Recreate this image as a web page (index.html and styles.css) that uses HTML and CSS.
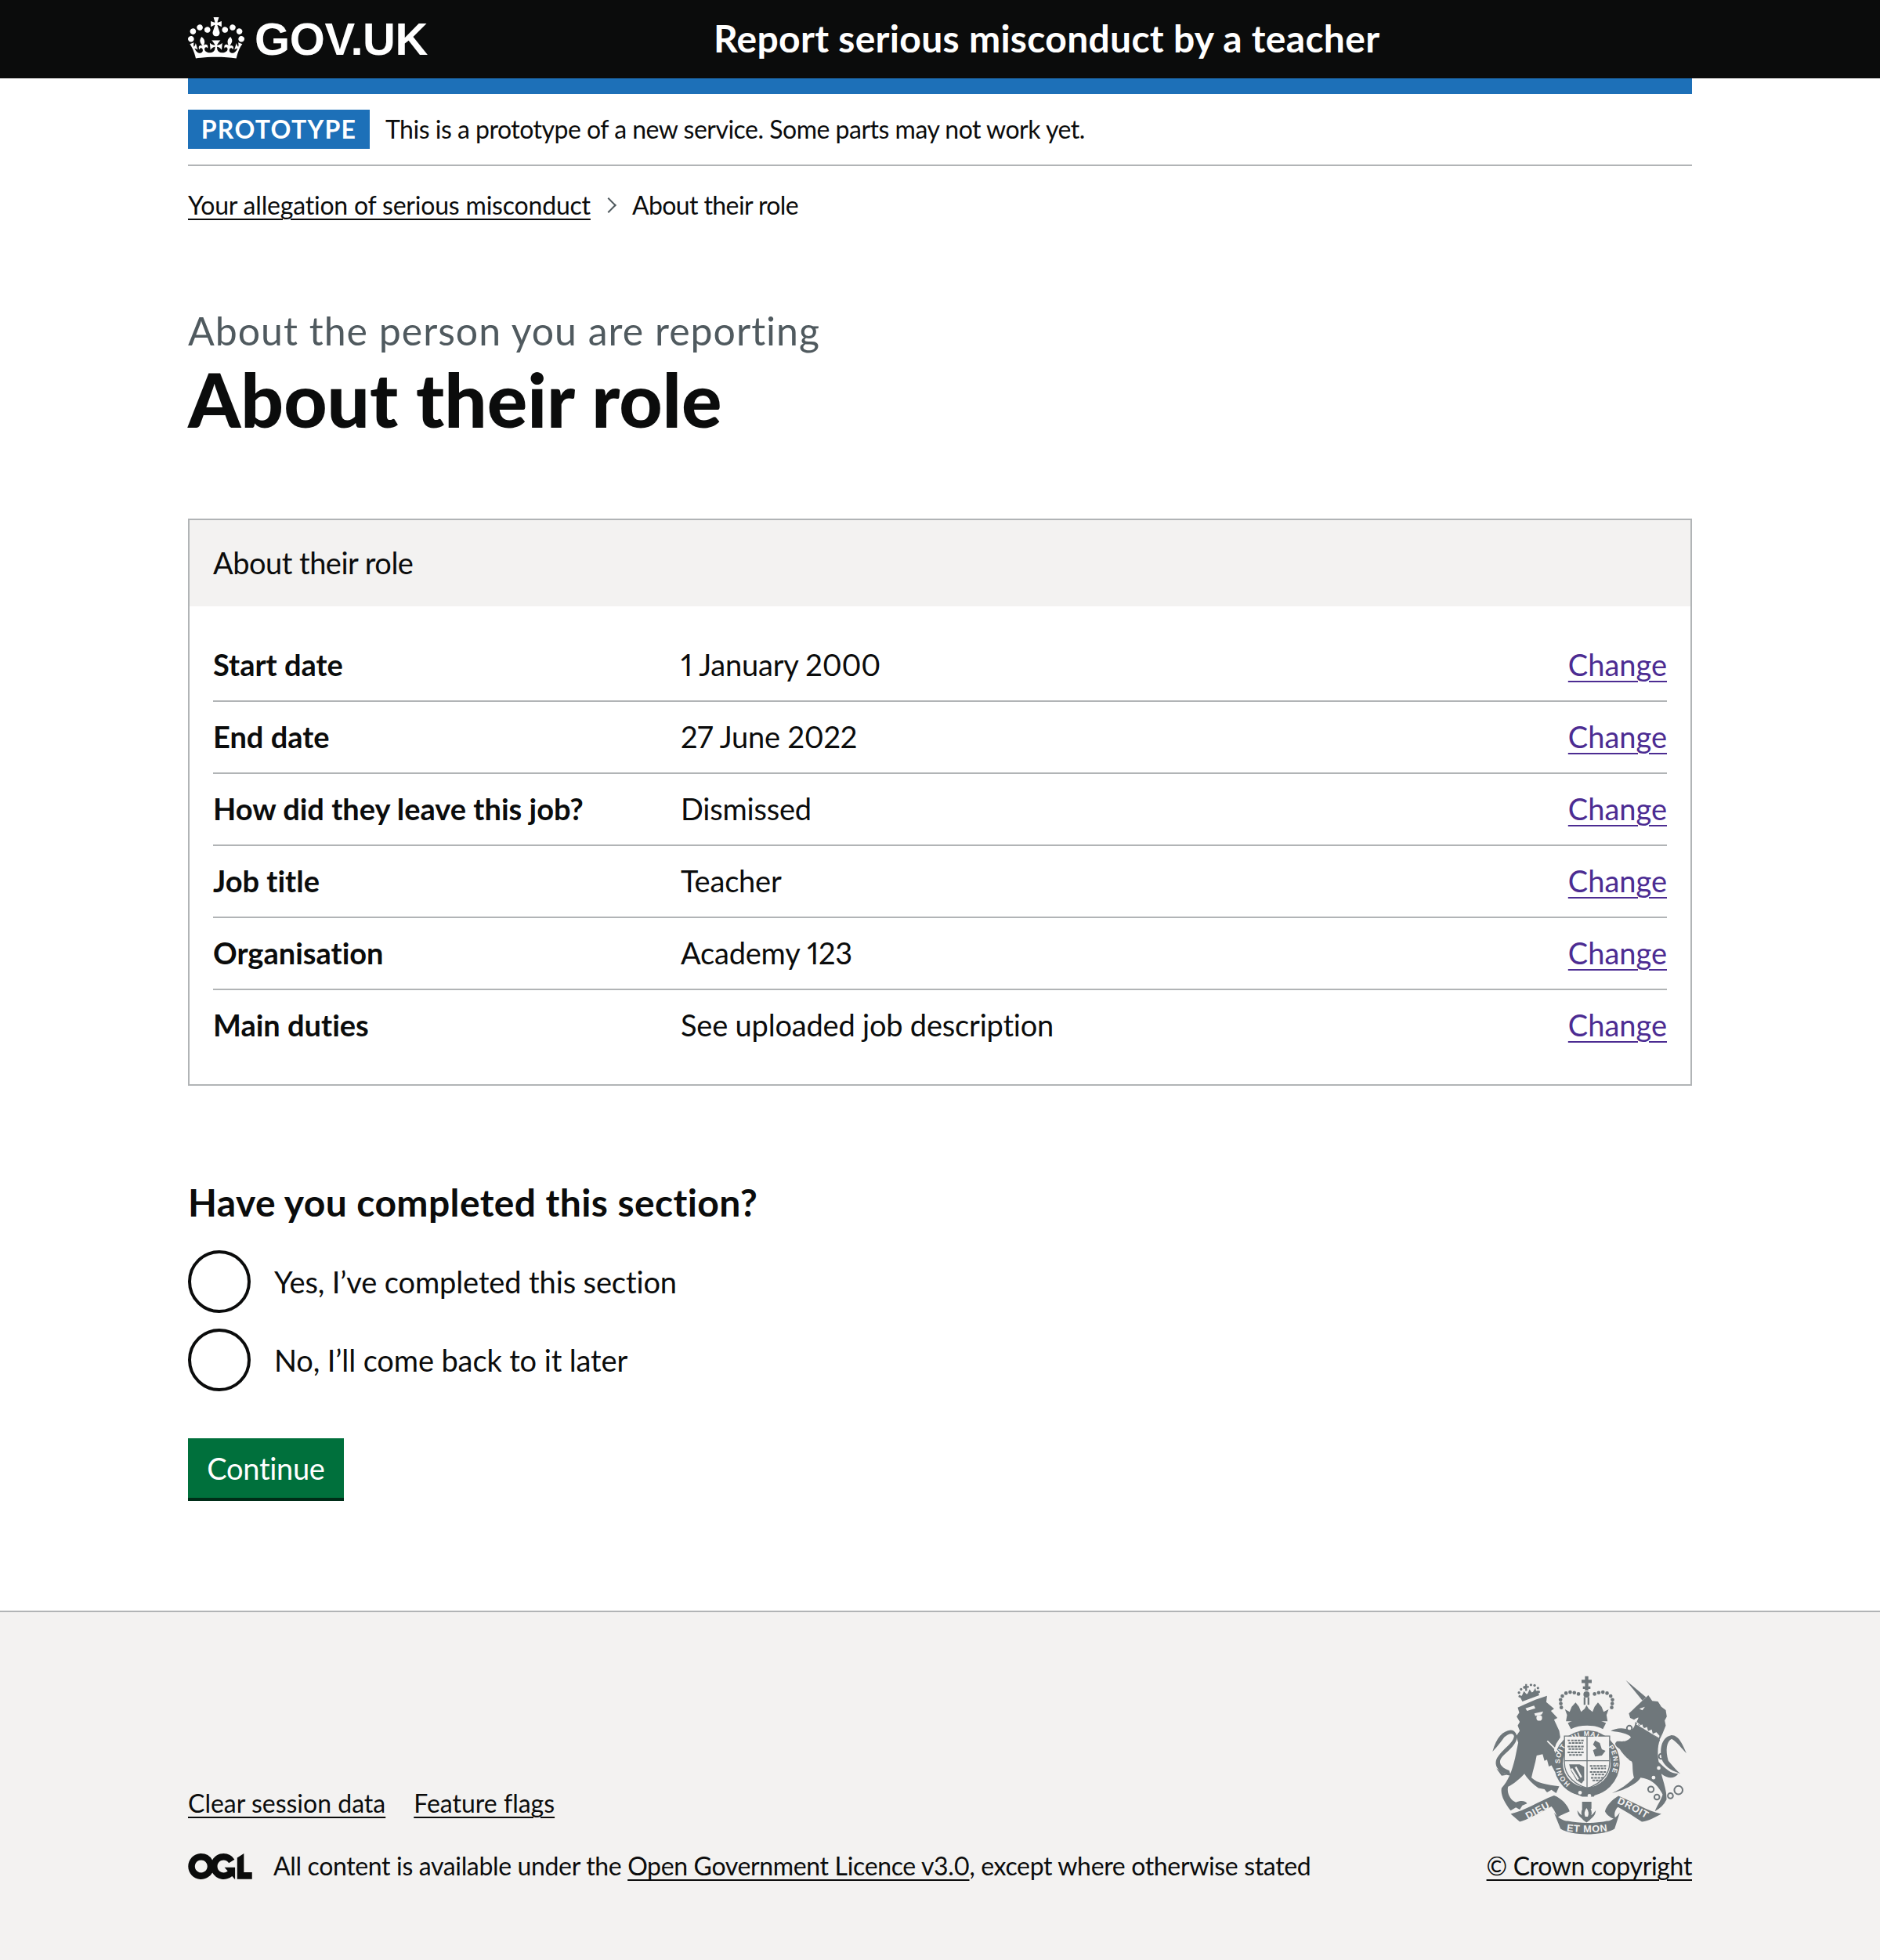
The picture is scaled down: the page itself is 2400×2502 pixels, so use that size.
FILE: index.html
```html
<!DOCTYPE html>
<html lang="en">
<head>
<meta charset="utf-8">
<title>About their role</title>
<link rel="stylesheet" href="styles.css">
</head>
<body>
<header class="header">
  <div class="wrap header-inner">
    <a class="logo" href="#">
      <svg class="crown" viewBox="0 0 132 97" aria-hidden="true"><path fill="currentColor" fill-rule="evenodd" d="M25 30.2c3.5 1.5 7.7-.2 9.1-3.7 1.5-3.6-.2-7.8-3.9-9.2-3.6-1.4-7.6.3-9.1 3.9-1.4 3.5.3 7.5 3.9 9zM9 39.5c3.6 1.5 7.8-.2 9.2-3.7 1.5-3.6-.2-7.8-3.9-9.1-3.6-1.5-7.6.2-9.1 3.8-1.4 3.5.3 7.5 3.8 9zM4.4 57.2c3.5 1.5 7.7-.2 9.1-3.8 1.5-3.6-.2-7.7-3.9-9.1-3.5-1.5-7.6.3-9.1 3.8-1.4 3.5.3 7.6 3.9 9.1zm38.3-21.4c3.5 1.5 7.7-.2 9.1-3.8 1.5-3.6-.2-7.7-3.9-9.1-3.6-1.5-7.6.3-9.1 3.8-1.3 3.6.4 7.7 3.9 9.1zm64.4-5.6c-3.6 1.5-7.8-.2-9.1-3.7-1.5-3.6.2-7.8 3.8-9.2 3.6-1.4 7.7.3 9.2 3.9 1.3 3.5-.4 7.5-3.9 9zm15.9 9.3c-3.6 1.5-7.7-.2-9.1-3.7-1.5-3.6.2-7.8 3.7-9.1 3.6-1.5 7.7.2 9.2 3.8 1.5 3.5-.3 7.5-3.8 9zm4.7 17.7c-3.6 1.5-7.8-.2-9.2-3.8-1.5-3.6.2-7.7 3.9-9.1 3.6-1.5 7.7.3 9.2 3.8 1.3 3.5-.4 7.6-3.9 9.1zM89.3 35.8c-3.6 1.5-7.8-.2-9.2-3.8-1.4-3.6.2-7.7 3.9-9.1 3.6-1.5 7.7.3 9.2 3.8 1.4 3.6-.3 7.7-3.9 9.1zM69.7 17.7l8.9 4.7V9.3l-8.9 2.8c-.2-.3-.5-.6-.9-.9L72.4 0H59.6l3.5 11.2c-.3.3-.6.5-.9.9l-8.8-2.8v13.1l8.8-4.7c.3.3.6.7.9.9l-5 15.4v.1c-.2.8-.4 1.6-.4 2.4 0 4.1 3.1 7.5 7 8.1h.2c.3 0 .7.1 1 .1.4 0 .7 0 1-.1h.2c4-.6 7.1-4.1 7.1-8.1 0-.8-.1-1.7-.4-2.4V34l-5.1-15.4c.4-.2.7-.6 1-.9zM66 92.8c16.9 0 32.8 1.1 47.1 3.2 4-16.9 8.9-26.7 14-33.5l-9.6-3.4c1 4.9 1.1 7.2 0 10.2-1.5-1.4-3-4.3-4.2-8.7L108.6 76c2.8-2 5-3.2 7.5-3.3-4.4 9.4-10 11.9-13.6 11.2-4.3-.8-6.3-4.6-5.6-7.9 1-4.7 5.7-5.9 8-.5 4.3-8.7-3-11.4-7.6-8.8 7.1-7.2 7.9-13.5 2.1-21.1-8 6.1-8.1 12.3-4.5 20.8-4.7-5.4-12.1-2.5-9.5 6.2 3.4-5.2 7.9-2 7.2 3.1-.6 4.3-6.4 7.8-13.5 7.2-10.3-.9-10.9-8-11.2-13.8 2.5-.5 7.1 1.8 11 7.3L80.2 60c-4.1 4.4-8 5.3-12.3 5.4 1.4-4.4 8-11.6 8-11.6H55.5s6.4 7.2 7.9 11.6c-4.2-.1-8-1-12.3-5.4l1.4 16.4c3.9-5.5 8.5-7.7 10.9-7.3-.3 5.8-.9 12.8-11.1 13.8-7.2.6-12.9-2.9-13.5-7.2-.7-5 3.8-8.3 7.1-3.1 2.7-8.7-4.6-11.6-9.4-6.2 3.7-8.5 3.6-14.7-4.6-20.8-5.8 7.6-5 13.9 2.2 21.1-4.7-2.6-11.9.1-7.7 8.8 2.3-5.5 7.1-4.2 8.1.5.7 3.3-1.3 7.1-5.7 7.9-3.5.7-9-1.8-13.5-11.2 2.5.1 4.7 1.3 7.5 3.3l-4.7-15.4c-1.2 4.4-2.7 7.2-4.3 8.7-1.1-3-.9-5.3 0-10.2l-9.5 3.4c5 6.9 9.9 16.7 14 33.5 14.8-2.1 30.8-3.2 47.7-3.2z"/></svg>
      <span class="logotype">GOV.UK</span>
    </a>
    <a class="service" href="#">Report serious misconduct by a teacher</a>
  </div>
</header>

<div class="wrap">
  <div class="blue-bar"></div>
  <div class="phase">
    <strong class="tag">PROTOTYPE</strong>
    <span class="phase-text">This is a prototype of a new service. Some parts may not work yet.</span>
  </div>
  <nav class="crumbs">
    <a class="link crumb-link" href="#">Your allegation of serious misconduct</a>
    <span class="chevron"></span>
    <span class="crumb-current">About their role</span>
  </nav>

  <main>
    <p class="caption">About the person you are reporting</p>
    <h1 class="title">About their role</h1>

    <section class="card">
      <h2 class="card-title">About their role</h2>
      <dl class="list">
        <div class="row"><dt>Start date</dt><dd>1 January 2000</dd><dd class="act"><a href="#">Change</a></dd></div>
        <div class="row"><dt>End date</dt><dd>27 June 2022</dd><dd class="act"><a href="#">Change</a></dd></div>
        <div class="row"><dt>How did they leave this job?</dt><dd>Dismissed</dd><dd class="act"><a href="#">Change</a></dd></div>
        <div class="row"><dt>Job title</dt><dd>Teacher</dd><dd class="act"><a href="#">Change</a></dd></div>
        <div class="row"><dt>Organisation</dt><dd>Academy 123</dd><dd class="act"><a href="#">Change</a></dd></div>
        <div class="row"><dt>Main duties</dt><dd>See uploaded job description</dd><dd class="act"><a href="#">Change</a></dd></div>
      </dl>
    </section>

    <h2 class="question">Have you completed this section?</h2>
    <div class="radios">
      <label class="radio"><span class="dot"></span><span>Yes, I’ve completed this section</span></label>
      <label class="radio"><span class="dot"></span><span>No, I’ll come back to it later</span></label>
    </div>
    <button class="button" type="button">Continue</button>
  </main>
</div>

<footer class="footer">
  <div class="wrap footer-inner">
    <div class="footer-left">
      <div class="footer-links">
        <a class="link" href="#">Clear session data</a>
        <a class="link" href="#">Feature flags</a>
      </div>
      <div class="licence">
        <svg class="ogl" viewBox="0 0 483.2 195.7" aria-hidden="true"><path fill="currentColor" d="M421.5 142.8V.1l-50.7 32.3v161.1h112.4v-50.7zm-122.3-9.6A47.12 47.12 0 0 1 221 97.8c0-26 21.1-47.1 47.1-47.1 16.7 0 31.4 8.7 39.7 21.8l42.7-27.2A97.63 97.63 0 0 0 268.1 0c-36.5 0-68.3 20.1-85.1 49.7A98 98 0 0 0 97.8 0C43.9 0 0 43.9 0 97.8s43.9 97.8 97.8 97.8c36.5 0 68.3-20.1 85.1-49.7a97.76 97.76 0 0 0 149.6 25.4l19.4 22.2h3v-87.8h-80l24.3 27.5zM97.8 145c-26 0-47.1-21.1-47.1-47.1s21.1-47.1 47.1-47.1 47.2 21 47.2 47S123.8 145 97.8 145"/></svg>
        <span>All content is available under the <a class="link" href="#">Open Government Licence v3.0</a>, except where otherwise stated</span>
      </div>
    </div>
    <div class="footer-right">
      <svg class="arms" viewBox="125 110 760 620" aria-hidden="true">
        <defs>
          <path id="garter" d="M436 530A103 103 0 1 1 560 530"/>
          <path id="scroll-l" d="M268 668C300 650 335 630 372 612"/>
          <path id="scroll-m" d="M410 708C460 718 540 718 590 708"/>
          <path id="scroll-r" d="M610 602C650 618 695 645 735 668"/>
        </defs>
        <g class="ink">
          <!-- lion: shaggy mane, body, legs -->
          <path d="M232 235L262 222L300 205L345 190L342 214L372 240L360 248L385 275L372 282L392 325L396 350L380 375L372 400C395 440 388 470 375 482L362 458L352 462L345 436L335 440L328 415L305 420C300 450 290 480 285 505C310 528 345 532 392 538L380 565L362 552L345 562L335 550L312 545C290 530 270 510 258 490C240 510 215 530 195 540C190 560 200 590 225 600C245 590 265 595 268 605L250 612L240 628L225 620L205 632C180 600 165 570 170 545C195 520 210 480 222 430L234 370L226 345L240 325L232 305L240 290L228 270L238 255Z"/>
          <!-- lion tail -->
          <path d="M135 405C150 350 175 325 205 322C222 322 232 340 228 358C220 385 190 405 172 425C155 445 165 465 200 478L205 498C165 490 140 465 150 435C165 400 215 375 218 345C215 330 195 335 180 350C165 370 155 385 135 405Z"/>
          <path d="M150 470C165 478 175 490 190 495L170 498Z"/>
          <!-- lion crown -->
          <path d="M240 192L308 170L315 188L250 212Z"/>
          <path d="M261 145h7v7h7v7h-7v12h-7v-12h-7v-7h7z"/>
          <path d="M247 192L256 172L268 186L278 165L288 180L300 160L304 176Z"/>
          <!-- unicorn -->
          <path d="M648 130L726 195L712 208Z"/>
          <path d="M660 258C680 240 705 215 722 200L735 188L750 210L772 212L785 232L802 245L806 270L798 285L802 305L790 335L778 360L690 290C700 270 700 270 680 282L665 275Z"/>
          <path d="M685 290L780 360C770 380 770 420 775 445C800 470 820 490 850 490C835 510 810 510 785 490C795 530 805 550 805 590C795 610 780 625 760 635C770 610 785 590 790 570C770 530 745 510 705 505C695 525 650 550 610 560L595 565C625 550 650 535 680 505C670 470 680 440 665 440C655 430 640 420 625 395C610 385 600 375 615 365C635 365 650 370 668 350C660 335 625 330 590 325C610 315 640 310 668 325C680 315 685 300 685 290Z"/>
          <path d="M790 442C775 400 785 350 822 342C852 340 868 380 882 412C862 392 850 372 825 356C805 365 800 400 812 440C830 462 845 478 858 490C835 482 805 470 790 442Z"/>
          <!-- royal crown -->
          <path d="M491 115h13v13h13v13h-13v13h8v10h-8v6h-13v-6h-8v-10h8v-13h-13v-13h13z"/>
          <circle cx="497" cy="185" r="12"/>
          <path d="M486 195h7v30h-7zM501 195h7v30h-7z"/>
          <path d="M422 264L414 242L432 252L440 232L455 216L468 232L476 252L490 240L497 226L505 240L520 252L528 232L541 216L555 232L563 252L582 242L574 264L578 288H418Z"/>
          <path d="M425 295C465 272 530 272 572 295L560 318C530 300 470 300 437 318Z"/>
          <!-- garter -->
          <circle cx="498" cy="450" r="127"/>
          <path d="M448 535C470 545 530 545 555 530L525 578H480L438 560Z"/>
          <!-- scrolls -->
          <path d="M205 645C260 632 310 598 372 574C402 585 425 612 432 635C410 645 395 650 385 660C378 640 372 628 362 616C310 645 265 668 240 675Z"/>
          <path d="M372 640C385 660 410 672 425 672C470 682 530 682 575 672C590 672 610 660 625 640L605 702C560 730 440 730 397 702Z"/>
          <path d="M568 635C575 610 595 590 620 575C680 600 730 632 785 645C750 665 725 675 710 675C680 655 650 635 618 618C605 630 600 650 612 668C590 660 575 650 568 635Z"/>
          <path d="M480 598h36v27h-36z"/>
          <path d="M497 605C515 620 520 640 515 650C525 645 535 625 532 635C530 655 515 660 510 668L497 678L484 668C479 660 464 655 462 635C459 625 469 645 479 650C474 640 479 620 497 605Z"/>
        </g>
        <g class="paper">
          <path d="M262 238L295 228L300 238L268 248Z"/>
          <circle cx="315" cy="275" r="11"/>
          <path d="M296 258L330 250L325 262L300 268Z"/>
          <path d="M348 362L394 408L390 412L344 366Z"/>
          <path d="M700 240L722 232L712 246Z"/>
          <path d="M694 294L698 306L712 300L716 316L730 310L734 326L748 320L752 336L766 330L778 344L776 352L688 300Z"/>
          <circle cx="498" cy="450" r="92"/>
          <circle cx="775" cy="468" r="7"/>
          <circle cx="755" cy="505" r="7"/>
          <circle cx="472" cy="563" r="7"/>
          <circle cx="508" cy="575" r="7"/>
          <path d="M497 622C505 632 507 645 502 655H492C487 645 489 632 497 622Z"/>
        </g>
        <g class="shield">
          <path d="M412 345H586V448C586 500 540 535 499 545C458 535 412 500 412 448Z"/>
          <path d="M499 345V545M412 440H586"/>
        </g>
        <g class="quarters">
          <path d="M424 362h64M428 372h56M424 385h64M428 395h56M424 408h64M430 418h52"/>
          <path d="M510 460h66M514 470h58M510 483h64M516 493h52M514 506h50M520 516h36"/>
        </g>
        <g class="ink">
          <path d="M530 362L548 372L556 396L570 402L556 420L530 424L522 400L536 392L522 378Z"/>
          <path d="M430 454h40l18 10v50l-10 14-20-14-20-34z"/>
        </g>
        <g class="paper">
          <path d="M442 468l26 42-6 4-26-42zM458 462l22 40-6 4-22-40z"/>
        </g>
        <g class="rings">
          <circle cx="662" cy="315" r="10"/><circle cx="652" cy="398" r="10"/>
          <circle cx="785" cy="423" r="10"/><circle cx="745" cy="550" r="11"/>
          <circle cx="768" cy="580" r="10"/><circle cx="820" cy="575" r="10"/>
          <circle cx="851" cy="553" r="16"/>
        </g>
        <g class="beads">
          <circle cx="398" cy="220" r="7"/><circle cx="397" cy="205" r="7"/><circle cx="404" cy="191" r="7"/><circle cx="418" cy="180" r="7"/><circle cx="434" cy="176" r="7"/><circle cx="450" cy="178" r="7"/><circle cx="466" cy="183" r="7"/><circle cx="400" cy="235" r="7"/>
          <circle cx="596" cy="220" r="7"/><circle cx="597" cy="205" r="7"/><circle cx="590" cy="191" r="7"/><circle cx="576" cy="180" r="7"/><circle cx="560" cy="176" r="7"/><circle cx="544" cy="178" r="7"/><circle cx="528" cy="183" r="7"/><circle cx="594" cy="235" r="7"/>
          <circle cx="237" cy="178" r="5"/><circle cx="245" cy="165" r="5"/><circle cx="258" cy="158" r="5"/><circle cx="297" cy="150" r="5"/><circle cx="310" cy="160" r="5"/><circle cx="240" cy="192" r="5"/><circle cx="313" cy="175" r="5"/><circle cx="283" cy="148" r="5"/>
        </g>
        <g class="scroll-text">
          <text class="garter-text"><textPath href="#garter" startOffset="2">HONI SOIT QUI MAL Y PENSE</textPath></text>
          <text><textPath href="#scroll-l" startOffset="4">DIEU</textPath></text>
          <text><textPath href="#scroll-m" startOffset="10">ET MON</textPath></text>
          <text><textPath href="#scroll-r" startOffset="4">DROIT</textPath></text>
        </g>
      </svg>
      <a class="link copyright" href="#">© Crown copyright</a>
    </div>
  </div>
</footer>
</body>
</html>
```

FILE: styles.css
```css
* { box-sizing: border-box; }
html, body { margin: 0; padding: 0; }
body {
  background: #fff;
  color: #0b0c0c;
  font-family: Lato, "Noto Sans", sans-serif;
  font-size: 38px;
  line-height: 50px;
  letter-spacing: -0.2px;
  font-variant-ligatures: none;
  font-variant-numeric: proportional-nums;
}
.wrap { width: 1920px; margin: 0 auto; }
a { color: inherit; }
.link { text-decoration-thickness: 2px; text-underline-offset: 5px; }

.header { background: #0b0c0c; color: #fff; height: 100px; }
.header-inner { display: flex; align-items: center; height: 100px; }
.logo { display: flex; align-items: center; width: 671px; text-decoration: none; }
.crown { width: 72px; height: 53px; margin-top: -4px; }
.logotype {
  margin-left: 13px;
  font-family: "Liberation Sans", Arial, sans-serif;
  font-weight: 700;
  font-size: 58px;
  line-height: 60px;
  letter-spacing: -0.4px;
}
.service {
  padding-bottom: 3px;
  font-size: 48px;
  font-weight: 700;
  line-height: 60px;
  letter-spacing: 0.3px;
  text-decoration: none;
}

.blue-bar { height: 20px; background: #1d70b8; }
.phase {
  display: flex;
  align-items: center;
  padding: 20px 0;
  border-bottom: 2px solid #b1b4b6;
}
.tag {
  display: block;
  height: 50px;
  width: 232px;
  background: #1d70b8;
  color: #fff;
  font-size: 32px;
  font-weight: 700;
  line-height: 50px;
  letter-spacing: 1.3px;
  text-align: center;
}
.phase-text { margin-left: 20px; font-size: 32px; line-height: 40px; letter-spacing: -0.5px; }

.crumbs {
  display: flex;
  align-items: center;
  padding-top: 30px;
  font-size: 32px;
  line-height: 40px;
}
.crumb-link { letter-spacing: -0.2px; }
.crumb-current { letter-spacing: -0.6px; }
.chevron {
  width: 14px;
  height: 14px;
  margin: 0 23px 0 16px;
  border-top: 2px solid #505a5f;
  border-right: 2px solid #505a5f;
  transform: rotate(45deg);
}

.caption { margin: 110px 0 7px; color: #505a5f; font-size: 50px; line-height: 60px; letter-spacing: 1px; }
.title { margin: 0 0 103px; font-size: 96px; font-weight: 900; line-height: 100px; letter-spacing: 0; }

.card { border: 2px solid #b1b4b6; margin-bottom: 119px; }
.card-title {
  margin: 0;
  padding: 0 30px;
  height: 110px;
  background: #f3f2f1;
  font-size: 38px;
  font-weight: 400;
  line-height: 108px;
  letter-spacing: -0.5px;
}
.list { margin: 0; padding: 30px 30px 30px; }
.row {
  display: grid;
  grid-template-columns: 597px 1fr auto;
  align-items: center;
  height: 92px;
  padding-bottom: 3px;
  border-bottom: 2px solid #b1b4b6;
}
.row:last-child { border-bottom: 0; height: 90px; }
.row dt { font-weight: 700; letter-spacing: 0; }
.row dd { margin: 0; }
.act a { color: #4c2c92; letter-spacing: 0; text-decoration-thickness: 2px; text-underline-offset: 6px; }

.question { margin: 0 0 31px; font-size: 48px; font-weight: 700; line-height: 60px; letter-spacing: 0.4px; }
.radios { display: flex; flex-direction: column; gap: 20px; margin-bottom: 60px; letter-spacing: -0.12px; }
.radio { display: flex; align-items: center; gap: 30px; height: 80px; }
.dot { width: 80px; height: 80px; border: 4px solid #0b0c0c; border-radius: 50%; background: #fff; }
.button {
  display: block;
  width: 199px;
  height: 76px;
  margin: 0 0 144px;
  padding: 0;
  border: 0;
  background: #00703c;
  box-shadow: 0 4px 0 #002d18;
  color: #fff;
  font-family: inherit;
  font-size: 38px;
  line-height: 76px;
  letter-spacing: -0.3px;
}

.footer { background: #f3f2f1; border-top: 2px solid #b1b4b6; height: 446px; font-size: 32px; line-height: 40px; letter-spacing: -0.35px; }
.footer-inner { display: flex; justify-content: space-between; align-items: flex-end; height: 100%; padding-bottom: 100px; }
.footer-links { display: flex; gap: 36px; margin-bottom: 40px; letter-spacing: 0; }
.licence { display: flex; align-items: center; gap: 27px; }
.ogl { width: 82px; height: 33px; }
.footer-right { display: flex; flex-direction: column; align-items: flex-end; }
.arms { width: 252px; height: 206px; margin: 0 6px 18px 0; }
.ink { fill: #6f777b; }
.paper { fill: #f3f2f1; }
.shield { fill: #f3f2f1; stroke: #6f777b; stroke-width: 4; }
.quarters { fill: none; stroke: #6f777b; stroke-width: 6; stroke-dasharray: 10 3; }
.rings { fill: none; stroke: #6f777b; stroke-width: 6; }
.beads { fill: #6f777b; }
.scroll-text { fill: #f3f2f1; font-family: "Liberation Sans", sans-serif; font-weight: 700; font-size: 38px; letter-spacing: 2px; }
.garter-text { font-size: 26px; letter-spacing: 3.5px; }
```
